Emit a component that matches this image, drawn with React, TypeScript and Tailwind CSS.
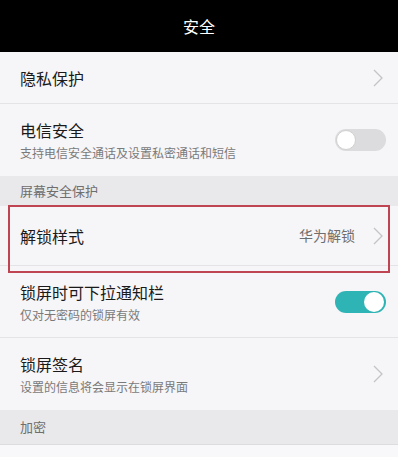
import React from 'react';

const font = { fontFamily: '"Noto Sans CJK SC", "Noto Sans", sans-serif' };

function Chevron() {
  return (
    <svg width="10" height="18" viewBox="0 0 10 18" fill="none" className="mr-[3px] shrink-0">
      <path d="M1 1l8 8-8 8" stroke="#c4c4c6" strokeWidth="1.3" />
    </svg>
  );
}

function Toggle({ on }: { on: boolean }) {
  return (
    <div
      className={
        'relative h-[22px] w-[51px] shrink-0 rounded-full ' +
        (on ? 'bg-[#2fb4b5]' : 'bg-[#dcdbdd]')
      }
    >
      <div
        className={
          'absolute top-[1px] h-[20px] w-[20px] rounded-full bg-white ' +
          (on ? 'right-[2px]' : 'left-[1px] border border-[#d0d0d0]')
        }
      />
    </div>
  );
}

function Row({
  title,
  sub,
  right,
  h,
  last,
}: {
  title: string;
  sub?: string;
  right: React.ReactNode;
  h: string;
  last?: boolean;
}) {
  return (
    <div className={'flex items-center pl-5 pr-[12px] ' + h + (last ? '' : ' border-b border-[#e4e3e5]')}>
      <div className="flex flex-1 flex-col">
        <span className="text-[16px] leading-[22px] text-[#1a1a1a]">{title}</span>
        {sub && <span className="mt-[4px] text-[12px] leading-[16px] text-[#7a7a7a]">{sub}</span>}
      </div>
      {right}
    </div>
  );
}

function Section({ label, h }: { label: string; h: string }) {
  return (
    <div className={'flex items-center bg-[#e9e8ea] pl-5 ' + h}>
      <span className="text-[13px] text-[#6e6e6e]">{label}</span>
    </div>
  );
}

export default function App() {
  return (
    <div className="flex h-[457px] w-[403px] overflow-hidden bg-white" style={font}>
      <div className="relative flex w-[398px] flex-col bg-[#f6f5f7]">
        <div className="flex h-[52px] items-center justify-center bg-black">
          <span className="text-[16px] text-white">安全</span>
        </div>
        <Row title="隐私保护" h="h-[52px]" right={<Chevron />} />
        <Row
          title="电信安全"
          sub="支持电信安全通话及设置私密通话和短信"
          h="h-[72px]"
          right={<Toggle on={false} />}
          last
        />
        <Section label="屏幕安全保护" h="h-[30px]" />
        <Row
          title="解锁样式"
          h="h-[60px]"
          right={
            <div className="flex items-center gap-[18px]">
              <span className="text-[14px] text-[#6e6e6e]">华为解锁</span>
              <Chevron />
            </div>
          }
        />
        <Row
          title="锁屏时可下拉通知栏"
          sub="仅对无密码的锁屏有效"
          h="h-[72px]"
          right={<Toggle on />}
        />
        <Row
          title="锁屏签名"
          sub="设置的信息将会显示在锁屏界面"
          h="h-[72px]"
          right={<Chevron />}
          last
        />
        <Section label="加密" h="h-[35px] border-b border-[#dcdbdd]" />
        <div className="flex-1 bg-[#f8f7f9]" />
        <div className="pointer-events-none absolute left-[8px] top-[205px] h-[68px] w-[382px] border-2 border-[#c04552]" />
      </div>
    </div>
  );
}
